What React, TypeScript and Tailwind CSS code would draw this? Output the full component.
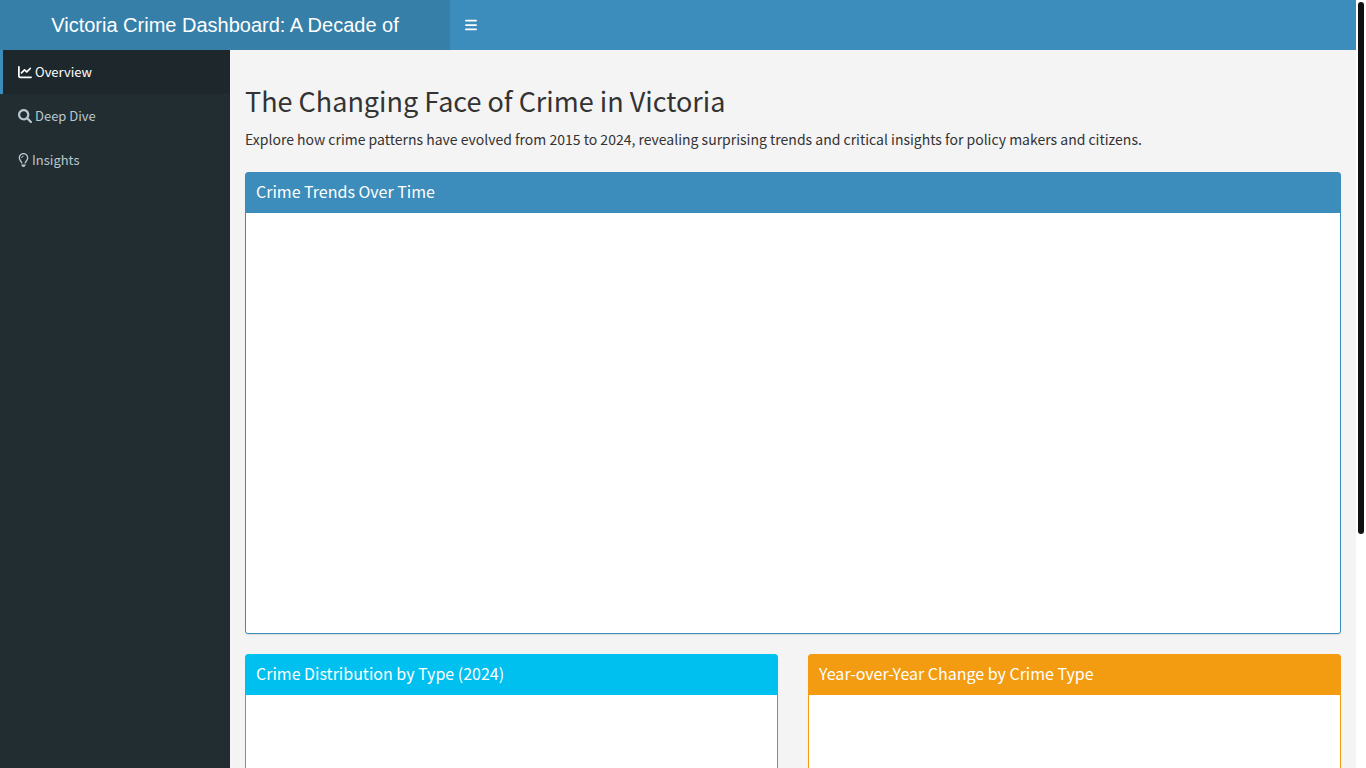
import type { ReactNode } from "react";
import { FaBars, FaChartLine, FaRegLightbulb } from "react-icons/fa6";

function SearchIcon({ className }: { className?: string }) {
  return (
    <svg viewBox="0 0 512 512" fill="currentColor" className={className} aria-hidden="true">
      <path d="M500.3 443.7l-119.7-119.7c27.22-40.41 40.65-90.9 33.46-144.7C401.8 87.79 326.8 13.32 235.2 1.723C99.01-15.51-15.51 99.01 1.724 235.2c11.6 91.64 86.08 166.7 177.6 178.9c53.8 7.189 104.3-6.236 144.7-33.46l119.7 119.7c15.62 15.62 40.95 15.62 56.57 0C515.9 484.7 515.9 459.3 500.3 443.7zM79.1 208c0-70.58 57.42-128 128-128s128 57.42 128 128c0 70.58-57.42 128-128 128S79.1 278.6 79.1 208z" />
    </svg>
  );
}

const navItems = [
  { label: "Overview", icon: FaChartLine, width: "w-[14px]", active: true },
  { label: "Deep Dive", icon: SearchIcon, width: "w-[14px]", active: false },
  { label: "Insights", icon: FaRegLightbulb, width: "w-[11px]", active: false },
];

const tones = {
  primary: { border: "border-[#3c8dbc]", header: "bg-[#3c8dbc]" },
  info: { border: "border-[#00c0ef]", header: "bg-[#00c0ef]" },
  warning: { border: "border-[#f39c12]", header: "bg-[#f39c12]" },
};

type BoxProps = { title: string; tone: keyof typeof tones; bodyClass: string; children?: ReactNode };

function Box({ title, tone, bodyClass, children }: BoxProps) {
  const { border, header } = tones[tone];
  return (
    <section className={`mb-5 rounded-[3px] border bg-white shadow-[0_1px_1px_rgba(0,0,0,0.1)] ${border}`}>
      <header className={`px-[10px] pt-2 pb-3 text-white ${header}`}>
        <h3 className="text-[16px] leading-5">{title}</h3>
      </header>
      <div className={bodyClass}>{children}</div>
    </section>
  );
}

export default function App() {
  return (
    <div className="flex h-screen bg-white font-['Noto_Sans_CJK_SC',sans-serif] text-[#333]">
      <div className="min-w-0 flex-1 overflow-y-auto bg-[#222d32] [scrollbar-width:none]">
        <header className="flex h-[50px] bg-[#3c8dbc] text-white">
          <span className="w-[450px] shrink-0 bg-[#367fa9] px-[15px] text-center font-['Liberation_Sans',sans-serif] text-[20px] leading-[50px]">
            Victoria Crime Dashboard: A Decade of
          </span>
          <button type="button" aria-label="Toggle navigation" className="px-[15px]">
            <FaBars className="h-[14px] w-[12px]" preserveAspectRatio="none" />
          </button>
        </header>
        <div className="flex">
          <nav className="w-[230px] shrink-0">
            <ul>
              {navItems.map(({ label, icon: Icon, width, active }) => (
                <li key={label}>
                  <a
                    href="#"
                    className={`flex h-11 items-center gap-[3px] border-l-[3px] pl-[15px] text-[13px] leading-5 ${
                      active ? "border-[#3c8dbc] bg-[#1e282c] text-white" : "border-transparent text-[#b8c7ce]"
                    }`}
                  >
                    <Icon className={`h-[14px] ${width}`} />
                    {label}
                  </a>
                </li>
              ))}
            </ul>
          </nav>
          <main className="min-w-0 flex-1 bg-[#f4f4f4] px-[15px] pt-[34px] pb-[15px]">
            <h2 className="text-[27px] leading-[33px]">The Changing Face of Crime in Victoria</h2>
            <p className="mt-[10px] mb-[21px] text-[14px] leading-6">
              Explore how crime patterns have evolved from 2015 to 2024, revealing surprising trends and critical insights for policy makers and citizens.
            </p>
            <Box title="Crime Trends Over Time" tone="primary" bodyClass="h-[420px]" />
            <div className="grid grid-cols-2 gap-[30px]">
              <Box title="Crime Distribution by Type (2024)" tone="info" bodyClass="h-[370px]" />
              <Box title="Year-over-Year Change by Crime Type" tone="warning" bodyClass="h-[370px]" />
            </div>
          </main>
        </div>
      </div>
      <div className="w-[10px] shrink-0 p-[2px]" aria-hidden="true">
        <div className="h-[532px] rounded-full bg-[#111]" />
      </div>
    </div>
  );
}
